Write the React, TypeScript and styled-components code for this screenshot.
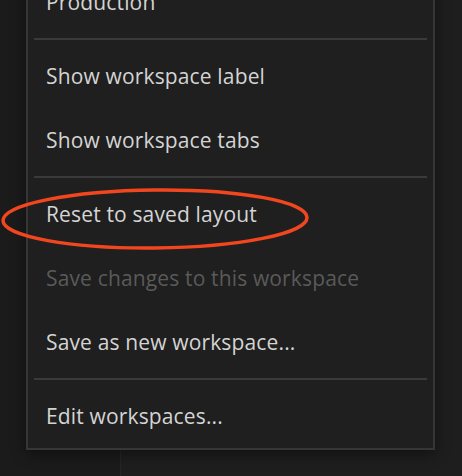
import React from "react";
import styled, { createGlobalStyle } from "styled-components";

const GlobalStyle = createGlobalStyle`
  html, body { margin: 0; padding: 0; background: #1b1b1b; }
  body { font-family: "Open Sans", "Noto Sans", sans-serif; -webkit-font-smoothing: antialiased; }
`;

const Screen = styled.div`
  position: relative;
  width: 462px; height: 476px;
  overflow: hidden;
  display: grid;
  grid-template-columns: 120px 1fr;
  background: #1b1b1b;
`;

const Pane = styled.div<{ $right?: boolean }>`
  background: ${({ $right }) => ($right ? "#1e1e1e" : "#1b1b1b")};
  border-left: ${({ $right }) => ($right ? "1px solid #262626" : "none")};
`;

const Menu = styled.div`
  position: absolute;
  left: 26px; top: -32px;
  width: 409px;
  box-sizing: border-box;
  background: #1f1f1f;
  border: 2px solid #363636;
  box-shadow: 0 4px 14px rgba(0, 0, 0, 0.45);
  padding: 0 6px;
  display: flex; flex-direction: column;
`;

const Item = styled.div<{ $disabled?: boolean }>`
  height: 64px;
  display: flex; align-items: center;
  padding-left: 12px;
  font-size: 21px;
  font-weight: 500;
  letter-spacing: 0.15px;
  color: ${({ $disabled }) => ($disabled ? "#5a5a5a" : "#d4d4d4")};
  white-space: nowrap;
`;

const Separator = styled.div`
  height: 2px;
  margin: 4px 0 4px 0;
  background: #3a3a3a;
`;

const Annotation = styled.svg`
  position: absolute;
  left: 0; top: 186px;
  pointer-events: none;
`;

type Entry = { label?: string; disabled?: boolean; sep?: boolean };

const entries: Entry[] = [
  { label: "Production" },
  { sep: true },
  { label: "Show workspace label" },
  { label: "Show workspace tabs" },
  { sep: true },
  { label: "Reset to saved layout" },
  { label: "Save changes to this workspace", disabled: true },
  { label: "Save as new workspace..." },
  { sep: true },
  { label: "Edit workspaces..." },
];

export default function App() {
  return (
    <>
      <GlobalStyle />
      <Screen>
        <Pane />
        <Pane $right />
        <Menu>
          {entries.map((e, i) =>
            e.sep ? (
              <Separator key={i} />
            ) : (
              <Item key={i} $disabled={e.disabled}>
                {e.label}
              </Item>
            )
          )}
        </Menu>
        <Annotation width="320" height="68" viewBox="0 0 320 68">
          <ellipse
            cx="155"
            cy="33"
            rx="152"
            ry="29"
            fill="none"
            stroke="#f2461f"
            strokeWidth="3.5"
            transform="rotate(-0.6 155 33)"
          />
        </Annotation>
      </Screen>
    </>
  );
}
